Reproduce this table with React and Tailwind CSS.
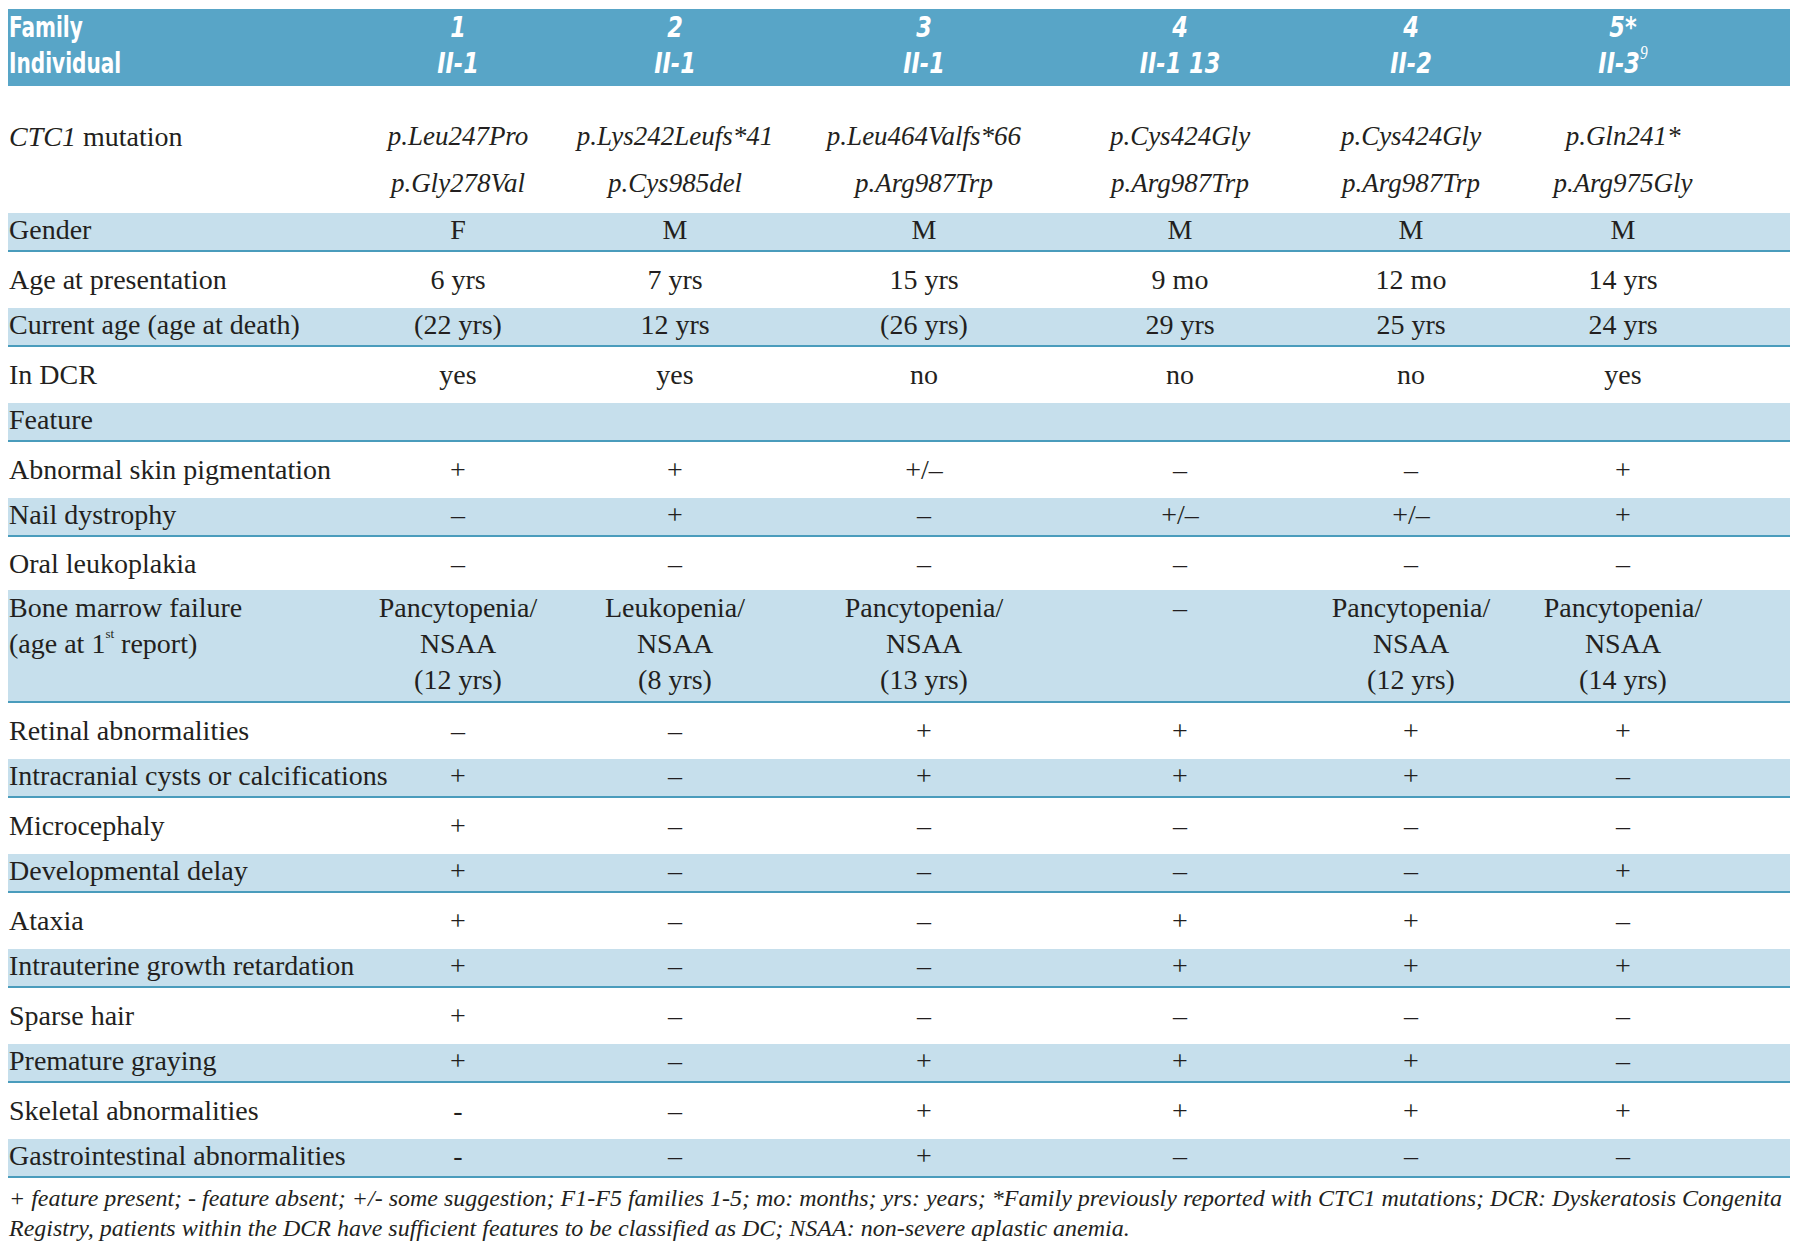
import React from "react";

const GRID = "grid grid-cols-[342px_216px_218px_280px_232px_230px_194px_1fr]";
const SERIF = "font-['Liberation_Serif',serif]";
const HEAD = "font-['Liberation_Sans_Narrow','DejaVu_Sans_Condensed','Liberation_Sans',sans-serif]";

const D = "–";
const rows = [
  { t: "b", label: "Gender", v: ["F", "M", "M", "M", "M", "M"] },
  { t: "w", label: "Age at presentation", v: ["6 yrs", "7 yrs", "15 yrs", "9 mo", "12 mo", "14 yrs"] },
  { t: "b", label: "Current age (age at death)", v: ["(22 yrs)", "12 yrs", "(26 yrs)", "29 yrs", "25 yrs", "24 yrs"] },
  { t: "w", label: "In DCR", v: ["yes", "yes", "no", "no", "no", "yes"] },
  { t: "b", label: "Feature", v: ["", "", "", "", "", ""] },
  { t: "w", label: "Abnormal skin pigmentation", v: ["+", "+", "+/" + D, D, D, "+"] },
  { t: "b", label: "Nail dystrophy", v: [D, "+", D, "+/" + D, "+/" + D, "+"] },
  { t: "w", label: "Oral leukoplakia", v: [D, D, D, D, D, D], h: "h-[53px]" },
  { t: "bm" },
  { t: "w", label: "Retinal abnormalities", v: [D, D, "+", "+", "+", "+"] },
  { t: "b", label: "Intracranial cysts or calcifications", v: ["+", D, "+", "+", "+", D] },
  { t: "w", label: "Microcephaly", v: ["+", D, D, D, D, D] },
  { t: "b", label: "Developmental delay", v: ["+", D, D, D, D, "+"] },
  { t: "w", label: "Ataxia", v: ["+", D, D, "+", "+", D] },
  { t: "b", label: "Intrauterine growth retardation", v: ["+", D, D, "+", "+", "+"] },
  { t: "w", label: "Sparse hair", v: ["+", D, D, D, D, D] },
  { t: "b", label: "Premature graying", v: ["+", D, "+", "+", "+", D] },
  { t: "w", label: "Skeletal abnormalities", v: ["-", D, "+", "+", "+", "+"] },
  { t: "b", label: "Gastrointestinal abnormalities", v: ["-", D, "+", D, D, D] },
];

function Row({ r }) {
  if (r.t === "bm") {
    const bm = [
      ["Pancytopenia/", "NSAA", "(12 yrs)"],
      ["Leukopenia/", "NSAA", "(8 yrs)"],
      ["Pancytopenia/", "NSAA", "(13 yrs)"],
      [D],
      ["Pancytopenia/", "NSAA", "(12 yrs)"],
      ["Pancytopenia/", "NSAA", "(14 yrs)"],
    ];
    return (
      <div className={`${GRID} h-[113px] bg-[#c6dfec] border-b-2 border-[#4a9cbc] pt-0 leading-[36px] items-start`}>
        <div className="pl-[1px] whitespace-nowrap">
          Bone marrow failure
          <br />
          (age at 1<sup className="text-[13px] align-[9px]">st</sup> report)
        </div>
        {bm.map((lines, i) => (
          <div key={i} className="text-center whitespace-nowrap">
            {lines.map((l, j) => (
              <div key={j}>{l}</div>
            ))}
          </div>
        ))}
        <div />
      </div>
    );
  }
  const blue = r.t === "b";
  return (
    <div
      className={`${GRID} ${
        blue
          ? "items-start h-[39px] bg-[#c6dfec] border-b-2 border-[#4a9cbc] pt-[4px] leading-[26px]"
          : "items-center " + (r.h || "h-[56px]")
      }`}
    >
      <div className="pl-[1px] whitespace-nowrap">{r.label}</div>
      {r.v.map((v, i) => (
        <div key={i} className="text-center whitespace-nowrap">
          {v}
        </div>
      ))}
      <div />
    </div>
  );
}

export default function App() {
  const heads = [
    ["1", "II-1"],
    ["2", "II-1"],
    ["3", "II-1"],
    ["4", "II-1 13"],
    ["4", "II-2"],
    ["5*", "II-3"],
  ];
  return (
    <div className="w-[1800px] h-[1247px] bg-white pl-[8px] pt-[9px] text-[#231f20]">
      <div className="w-[1782px]">
        <div className={`${GRID} h-[77px] bg-[#58a5c7] text-white font-bold ${HEAD} text-[29px] leading-[36px]`}>
          <div className="pl-[1px]">
            <div className="origin-left scale-x-[0.77]">Family</div>
            <div className="origin-left scale-x-[0.77]">Individual</div>
          </div>
          {heads.map((h, i) => (
            <div key={i} className="text-center italic whitespace-nowrap scale-x-[0.86]">
              <div>{h[0]}</div>
              <div>
                {h[1]}
                {i === 5 && (
                  <sup className={`${SERIF} font-normal text-[18px] align-[5px]`}>9</sup>
                )}
              </div>
            </div>
          ))}
          <div />
        </div>
        <div className={`${SERIF} text-[28px]`}>
          <div className={`${GRID} h-[127px] pt-[27px] leading-[47px] items-start`}>
            <div className="pl-[1px] whitespace-nowrap">
              <i>CTC1</i> mutation
            </div>
            {[
              ["p.Leu247Pro", "p.Gly278Val"],
              ["p.Lys242Leufs*41", "p.Cys985del"],
              ["p.Leu464Valfs*66", "p.Arg987Trp"],
              ["p.Cys424Gly", "p.Arg987Trp"],
              ["p.Cys424Gly", "p.Arg987Trp"],
              ["p.Gln241*", "p.Arg975Gly"],
            ].map((m, i) => (
              <div key={i} className="text-center italic whitespace-nowrap text-[27px]">
                <div>{m[0]}</div>
                <div>{m[1]}</div>
              </div>
            ))}
            <div />
          </div>
          {rows.map((r, i) => (
            <Row key={i} r={r} />
          ))}
        </div>
        <div className={`${SERIF} italic text-[24px] leading-[30px] pt-[5px] pl-[1px] whitespace-nowrap`}>
          + feature present; - feature absent; +/- some suggestion; F1-F5 families 1-5; mo: months; yrs: years; *Family previously reported with CTC1 mutations; DCR: Dyskeratosis Congenita
          <br />
          Registry, patients within the DCR have sufficient features to be classified as DC; NSAA: non-severe aplastic anemia.
        </div>
      </div>
    </div>
  );
}
